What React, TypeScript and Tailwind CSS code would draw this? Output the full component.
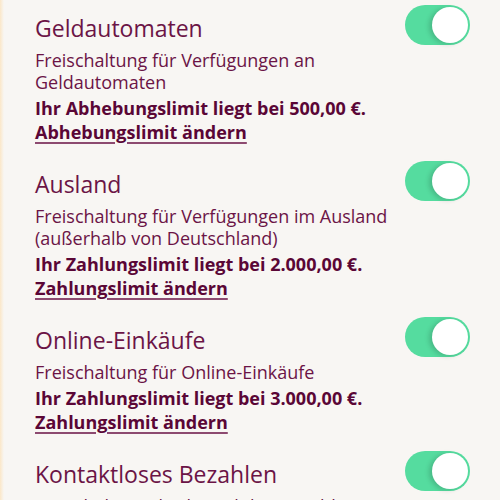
import { useState } from "react";

type Setting = {
  id: string;
  title: string;
  description: string;
  limit?: string;
  link?: string;
};

const settings: Setting[] = [
  {
    id: "atm",
    title: "Geldautomaten",
    description: "Freischaltung für Verfügungen an Geldautomaten",
    limit: "Ihr Abhebungslimit liegt bei 500,00 €.",
    link: "Abhebungslimit ändern",
  },
  {
    id: "abroad",
    title: "Ausland",
    description: "Freischaltung für Verfügungen im Ausland (außerhalb von Deutschland)",
    limit: "Ihr Zahlungslimit liegt bei 2.000,00 €.",
    link: "Zahlungslimit ändern",
  },
  {
    id: "online",
    title: "Online-Einkäufe",
    description: "Freischaltung für Online-Einkäufe",
    limit: "Ihr Zahlungslimit liegt bei 3.000,00 €.",
    link: "Zahlungslimit ändern",
  },
  {
    id: "contactless",
    title: "Kontaktloses Bezahlen",
    description: "Freischaltung des kontaktlosen Zahlens mit der Karte",
  },
];

function Toggle({ on, onChange }: { on: boolean; onChange: () => void }) {
  return (
    <button
      onClick={onChange}
      className={`relative w-[65px] h-10 rounded-full shrink-0 transition-colors ${
        on ? "bg-[#55dc9f]" : "bg-[#d9d4cf]"
      }`}
    >
      <span
        className={`absolute top-[2px] w-9 h-9 rounded-full bg-white shadow-[-3px_1px_5px_rgba(0,0,0,0.16)] transition-all ${
          on ? "right-[2px]" : "left-[2px]"
        }`}
      />
    </button>
  );
}

export default function App() {
  const [enabled, setEnabled] = useState<Record<string, boolean>>({
    atm: true,
    abroad: true,
    online: true,
    contactless: true,
  });

  return (
    <div
      className="h-[500px] overflow-hidden bg-[#f8f6f3] flex"
      style={{ fontFamily: '"Open Sans", sans-serif' }}
    >
      {/* left edge glow */}
      <div className="w-[4px] shrink-0 bg-gradient-to-r from-[#fbe7c8] to-[#f8f6f3]" />

      <main className="flex-1 pl-[31px] pr-[30px] pt-[13px] flex flex-col gap-[25px]">
        {settings.map((s) => (
          <section key={s.id} className="flex items-start gap-[10px]">
            <div className="flex-1 min-w-0">
              <h2 className="text-[23px] leading-[30px] text-[#6b1446]">{s.title}</h2>
              <p className="mt-[6px] text-[18px] leading-[22px] text-[#6b1446]">
                {s.description}
              </p>
              {s.limit && (
                <p className="mt-[3px] text-[18px] leading-6 font-bold text-[#5a0636]">
                  {s.limit}
                </p>
              )}
              {s.link && (
                <a
                  href="#"
                  className="block text-[18px] leading-6 font-bold text-[#5a0636] underline decoration-[#8d4a70] decoration-2 underline-offset-[3px]"
                >
                  {s.link}
                </a>
              )}
            </div>
            <div className="-mt-2">
              <Toggle
                on={enabled[s.id]}
                onChange={() => setEnabled({ ...enabled, [s.id]: !enabled[s.id] })}
              />
            </div>
          </section>
        ))}
      </main>
    </div>
  );
}
